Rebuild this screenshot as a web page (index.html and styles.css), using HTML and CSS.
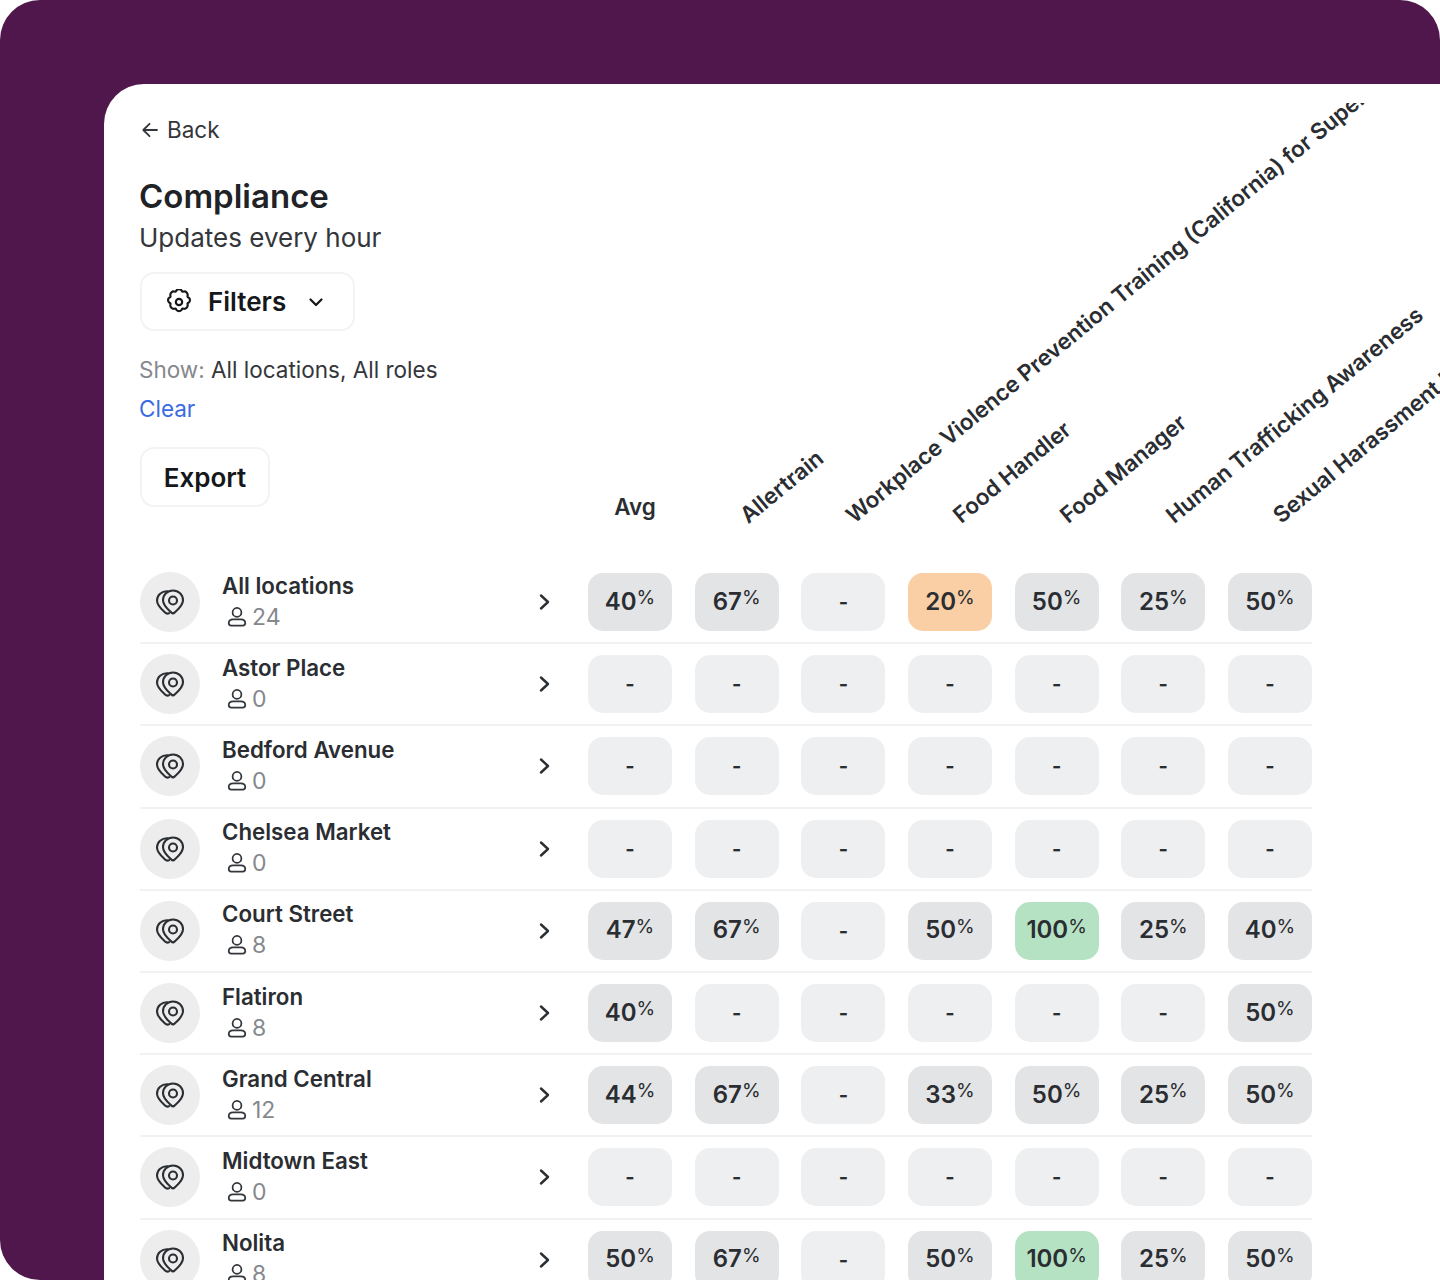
FILE: index.html
```html
<!DOCTYPE html>
<html lang="en">
<head>
<meta charset="UTF-8" />
<title>Compliance</title>
<link rel="stylesheet" href="styles.css">
</head>
<body>
<svg class="sprites" width="0" height="0">
  <symbol id="pin" viewBox="0 0 32 32">
    <path d="M19 4.500c-5.600 0-10 4.300-10 9.800 0 5.200 5.600 9.700 8.300 12.300.9.900 2.500.9 3.400 0C23.400 24 29 19.500 29 14.300c0-5.500-4.400-9.800-10-9.800z" />
    <circle cx="19" cy="14.500" r="4" />
    <path d="M13.500 5.300C7.800 5 3 9 3 14.500c0 5 5 9.200 8 12 1.300 1.200 3 1.300 4.200.6" />
  </symbol>
  <symbol id="user" viewBox="0 0 20 20">
    <circle cx="10" cy="5.800" r="4" />
    <path d="M2.500 15.500c0-2 1.800-3.300 4-3.300h7c2.200 0 4 1.300 4 3.300 0 1.400-.9 2.300-2.300 2.300H4.800c-1.400 0-2.300-.9-2.300-2.300z" />
  </symbol>
  <symbol id="chev" viewBox="0 0 14 20">
    <path d="M3 3.500 10 10l-7 6.500" />
  </symbol>
</svg>

<div class="frame">
  <main class="card">
    <div class="top">
      <div class="intro">
        <a class="back">
          <svg width="20" height="20" viewBox="0 0 20 20"><path d="M17 10H3.500M9.500 3.800 3.300 10l6.200 6.200" /></svg>
          Back
        </a>
        <h1>Compliance</h1>
        <p class="sub">Updates every hour</p>
        <button class="btn btn-filters">
          <svg class="gear" width="26" height="26" viewBox="3 3 18 18"><circle cx="12" cy="12" r="2.200" /><path d="M10.400 3.800c.7-.9 2.500-.9 3.200 0l.7 1 1.300-.1c1.200-.1 2.500 1.200 2.400 2.400l-.1 1.300 1 .7c.9.700.9 2.500 0 3.200l-1 .7.100 1.300c.1 1.200-1.200 2.500-2.400 2.400l-1.300-.1-.7 1c-.7.900-2.500.9-3.200 0l-.7-1-1.300.1c-1.200.1-2.500-1.200-2.400-2.400l.1-1.300-1-.7c-.9-.7-.9-2.500 0-3.200l1-.7-.1-1.300c-.1-1.200 1.200-2.500 2.400-2.400l1.300.1z" /></svg>
          Filters
          <svg class="caret" width="18" height="18" viewBox="0 0 18 18"><path d="M3.500 6.500 9 12l5.500-5.500" /></svg>
        </button>
        <p class="show"><span>Show:</span> All locations, All roles</p>
        <a class="clear">Clear</a>
        <button class="btn btn-export">Export</button>
      </div>
      <div class="heads">
        <div class="head head-avg">Avg</div>
        <div class="head"><span>Allertrain</span></div>
        <div class="head"><span>Workplace Violence Prevention Training (California) for Supervisors</span></div>
        <div class="head"><span>Food Handler</span></div>
        <div class="head"><span>Food Manager</span></div>
        <div class="head"><span>Human Trafficking Awareness</span></div>
        <div class="head"><span>Sexual Harassment Prevention</span></div>
      </div>
    </div>

    <div class="rows" id="rows"></div>
  </main>
</div>

<script>
  const locations = [
    ['All locations', 24, ['40', '67', '', '20o', '50', '25', '50']],
    ['Astor Place', 0, ['', '', '', '', '', '', '']],
    ['Bedford Avenue', 0, ['', '', '', '', '', '', '']],
    ['Chelsea Market', 0, ['', '', '', '', '', '', '']],
    ['Court Street', 8, ['47', '67', '', '50', '100g', '25', '40']],
    ['Flatiron', 8, ['40', '', '', '', '', '', '50']],
    ['Grand Central', 12, ['44', '67', '', '33', '50', '25', '50']],
    ['Midtown East', 0, ['', '', '', '', '', '', '']],
    ['Nolita', 8, ['50', '67', '', '50', '100g', '25', '50']]
  ];

  function scoreCell(value) {
    if (!value) return '<div class="score empty">-</div>';
    const tone = value.endsWith('o') ? ' orange' : value.endsWith('g') ? ' green' : '';
    return `<div class="score${tone}">${parseInt(value)}<sup>%</sup></div>`;
  }

  document.getElementById('rows').innerHTML = locations.map(([name, people, scores]) => `
    <div class="row">
      <div class="avatar"><svg width="32" height="32"><use href="#pin" /></svg></div>
      <div class="who">
        <div class="name">${name}</div>
        <div class="count"><svg width="22" height="22"><use href="#user" /></svg>${people}</div>
      </div>
      <svg class="chev" width="14" height="20"><use href="#chev" /></svg>
      <div class="scores">${scores.map(scoreCell).join('')}</div>
    </div>`).join('');
</script>
</body>
</html>
```

FILE: styles.css
```css
* {
  box-sizing: border-box;
}
body {
  margin: 0;
  background: #fff;
  font-family: Inter, "Liberation Sans", sans-serif;
  color: #1f2226;
}
.sprites {
  position: absolute;
}
svg {
  fill: none;
  stroke: currentColor;
  stroke-width: 1.8;
  stroke-linecap: round;
  stroke-linejoin: round;
  display: block;
}
.frame {
  width: 1440px;
  height: 1280px;
  background: #4f174c;
  border-radius: 40px 40px 0 40px;
  padding: 84px 0 0 104px;
  overflow: hidden;
}
.card {
  background: #fff;
  height: 1300px;
  border-top-left-radius: 40px;
  padding-left: 36px;
}

.top {
  display: flex;
  height: 478px;
}
.intro {
  width: 448px;
  flex: none;
  padding-top: 31px;
}
.back {
  display: flex;
  align-items: center;
  gap: 7px;
  font-size: 22.5px;
  line-height: 30px;
  color: #33363a;
}
h1 {
  margin: 31px 0 0 -1px;
  font-size: 33px;
  line-height: 40px;
  font-weight: 600;
}
.sub {
  margin: 2px 0 0 -1px;
  font-size: 26px;
  line-height: 40px;
  color: #33363a;
}
.btn {
  display: flex;
  align-items: center;
  background: #fff;
  border: 2px solid #f3f3f4;
  border-radius: 14px;
  font: 600 26px Inter, sans-serif;
  color: #15171a;
  padding: 0;
}
.btn-filters {
  margin-top: 14px;
  width: 215px;
  height: 59px;
  padding-left: 24px;
  gap: 16px;
}
.gear {
  stroke-width: 1.5;
}
.caret {
  margin-left: 5px;
  stroke-width: 2.2;
}
.show {
  margin: 24px 0 0 -1px;
  font-size: 22.5px;
  line-height: 30px;
  color: #33363a;
}
.show span {
  color: #85888d;
}
.clear {
  display: block;
  margin: 9px 0 0 -1px;
  font-size: 22.5px;
  line-height: 30px;
  color: #3b6be0;
}
.btn-export {
  margin-top: 23px;
  width: 130px;
  height: 60px;
  justify-content: center;
}

/* column labels, the long ones run off the top of the card */
.heads {
  display: grid;
  grid-template-columns: repeat(7, 84px);
  column-gap: 22.67px;
  align-items: end;
  height: 455px;
  margin-top: 19px;
  overflow: hidden;
  width: 900px;
}
.head {
  height: 0;
  white-space: nowrap;
  font-size: 22.4px;
  font-weight: 600;
  line-height: 28px;
  color: #2a2d31;
}
.head span {
  display: block;
  width: 0;
  transform: translate(57px, -57px) rotate(-39.500deg);
  transform-origin: 0 100%;
}
.head-avg {
  text-align: center;
  transform: translate(5px, -65px);
}

.rows {
  width: 1172px;
}
.row {
  display: flex;
  align-items: center;
  height: 82.2px;
  border-bottom: 2px solid #f1f2f3;
}
.avatar {
  flex: none;
  width: 60px;
  height: 60px;
  border-radius: 50%;
  background: #ededee;
  display: flex;
  align-items: center;
  justify-content: center;
  color: #2b2e32;
}
.avatar svg {
  stroke-width: 2.1;
}
.who {
  width: 316px;
  margin: 0 0 2px 22px;
  flex: none;
}
.name {
  font-size: 22.3px;
  line-height: 30px;
  font-weight: 600;
  color: #2a2d31;
}
.count {
  display: flex;
  align-items: center;
  gap: 4px;
  margin: 1px 0 0 4px;
  font-size: 23px;
  line-height: 30px;
  color: #85888d;
}
.count svg {
  color: #33363a;
  stroke-width: 1.6;
}
.chev {
  flex: none;
  color: #2b2e32;
  stroke-width: 2.4;
}
.scores {
  display: grid;
  grid-template-columns: repeat(7, 84px);
  column-gap: 22.67px;
  margin-left: 36px;
}
.score {
  height: 58px;
  border-radius: 15px;
  background: #e3e4e5;
  display: flex;
  align-items: center;
  justify-content: center;
  font-size: 24px;
  font-weight: 600;
  color: #2a2d31;
  padding-bottom: 2px;
}
.score sup {
  font-size: 19px;
  font-weight: 400;
  line-height: 1;
  margin-top: -7px;
}
.score.empty {
  background: #eeeff0;
  font-size: 20px;
  font-weight: 700;
  padding-bottom: 0;
}
.score.orange {
  background: #fbcfa5;
}
.score.green {
  background: #b6e2c4;
}
```
